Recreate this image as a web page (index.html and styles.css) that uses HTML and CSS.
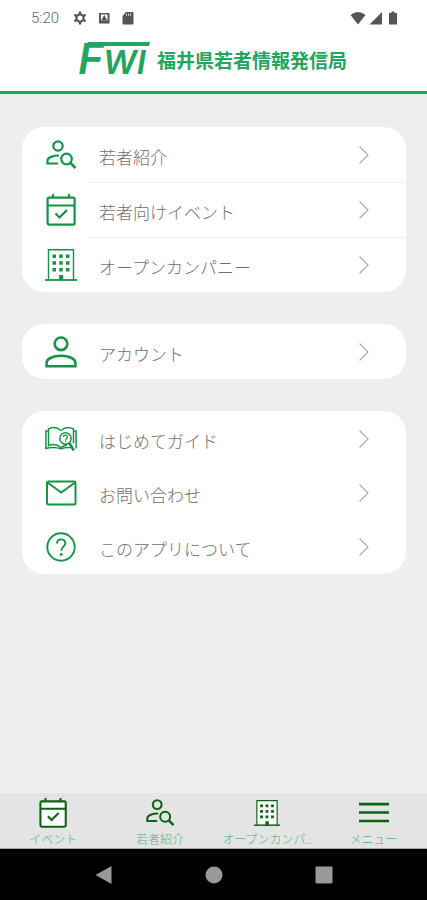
FILE: index.html
```html
<!DOCTYPE html>
<html lang="ja">
<head>
<meta charset="utf-8">
<meta name="viewport" content="width=device-width, initial-scale=1">
<title>福井県若者情報発信局</title>
<link rel="stylesheet" href="styles.css">
</head>
<body>
<svg class="defs" width="0" height="0" aria-hidden="true">
  <symbol id="person-search" viewBox="0 0 32 32">
    <g fill="none" stroke="currentColor" stroke-width="2.200">
      <circle cx="13" cy="7" r="4.700"/>
      <path d="M14 16.500C8 16.500 2.500 18.500 2.500 21.500V24.500H13"/>
      <circle cx="21.500" cy="20" r="5.300"/>
      <path d="M25.300 23.800L30.500 29" stroke-width="2.600"/>
    </g>
  </symbol>
  <symbol id="calendar" viewBox="0 0 32 32">
    <path class="paper" d="M3 4H29V31H3Z"/>
    <g fill="none" stroke="currentColor" stroke-width="2.200">
      <rect x="2.600" y="3.600" width="27" height="27" rx="1.500"/>
      <path d="M3 11.500H29M8 0V3M24 0V3"/>
      <path d="M10.500 19.500L14.500 23.500L22 16"/>
    </g>
  </symbol>
  <symbol id="building" viewBox="0 0 32 32">
    <path class="paper" d="M4 1H28V30H4Z"/>
    <path d="M3.500 31V.800H28.500V31" fill="none" stroke="currentColor" stroke-width="1.400"/>
    <path d="M0 31H32" stroke="currentColor" stroke-width="1.800"/>
    <path fill="currentColor" d="M7.500 5.500h3.500v3.500h-3.500zM14.200 5.500h3.500v3.500h-3.500zM21 5.500h3.500v3.500h-3.500zM7.500 12.300h3.500v3.500h-3.500zM14.200 12.300h3.500v3.500h-3.500zM21 12.300h3.500v3.500h-3.500zM7.500 19h3.500v3.500h-3.500zM14.200 19h3.500v3.500h-3.500zM21 19h3.500v3.500h-3.500zM14 26h4.200v5h-4.200z"/>
  </symbol>
  <symbol id="person" viewBox="0 0 32 32">
    <g fill="none" stroke="currentColor" stroke-width="2.600">
      <circle cx="16" cy="7.800" r="6.300"/>
      <path d="M1.600 30.200V27C1.600 22.500 8 19.800 16 19.800S30.400 22.500 30.400 27V30.200Z"/>
    </g>
  </symbol>
  <symbol id="guide" viewBox="0 0 32 32">
    <g fill="none" stroke="currentColor" stroke-width="1.500">
      <path d="M16 7.500C12 4 7 4 3.500 6V22.500C7 21 12 21 16 24.500C18 23 20 22.300 22 22.300M16 7.500C20 4 25 4 28.500 6V20"/>
      <path d="M3.500 8H.900V25.500C5 24 12 24 16 25.800C19 24.500 23 24.300 26 24.500M31.100 25.500V8H28.500"/>
      <circle cx="20.500" cy="15.500" r="5.700"/>
      <path d="M24.300 20L28.800 27.500" stroke-width="2.600"/>
      <path d="M18.500 14C18.500 11.500 22.500 11.500 22.500 14C22.500 15.500 20.500 15.500 20.500 17.500M20.500 18.300V19.300" stroke-width="1.200"/>
    </g>
  </symbol>
  <symbol id="mail" viewBox="0 0 32 32">
    <g fill="none" stroke="currentColor" stroke-width="2">
      <rect x="2" y="4.500" width="28.500" height="23" rx="1.500"/>
      <path d="M2.500 5.500L16.200 15.500L30 5.500"/>
    </g>
  </symbol>
  <symbol id="help" viewBox="0 0 32 32">
    <circle cx="16" cy="16" r="13.700" fill="none" stroke="currentColor" stroke-width="1.900"/>
    <path d="M12 12.500C12 7 20.300 7 20.300 12.200C20.300 15.500 16.200 15.800 16.200 19.800" fill="none" stroke="currentColor" stroke-width="1.900"/>
    <circle cx="16.200" cy="23.500" r="1.400" fill="currentColor"/>
  </symbol>
  <symbol id="menu" viewBox="0 0 32 32">
    <path d="M0 6.500H32M0 15.500H32M0 24.500H32" stroke="currentColor" stroke-width="2.800"/>
  </symbol>
  <symbol id="chevron" viewBox="0 0 12 20">
    <path d="M1.500 1.500L10 10L1.500 18.500" fill="none" stroke="currentColor" stroke-width="1.200"/>
  </symbol>
</svg>

<div class="status">
  <span class="time">5:20</span>
  <svg class="glyph" viewBox="0 0 14 14"><circle cx="7" cy="7" r="3.600" fill="none" stroke="currentColor" stroke-width="2.200"/><path d="M7 .500V3M7 11V13.500M1.400 3.800L3.500 5M10.500 9L12.600 10.200M1.400 10.200L3.500 9M10.500 5L12.600 3.800" stroke="currentColor" stroke-width="2.400"/></svg>
  <svg class="glyph" viewBox="0 0 14 14"><path fill="currentColor" fill-rule="evenodd" d="M2 2H12.500V12.500H2ZM4 3.500V9.500H10.500V3.500Z"/><path fill="currentColor" d="M7.200 4L8.800 6.500L10 9.500H4.500L5.700 6.500Z"/></svg>
  <svg class="glyph" viewBox="0 0 14 14"><path fill="currentColor" d="M5 1H11.500Q12.500 1 12.500 2V12.500Q12.500 13.500 11.500 13.500H2.500Q1.500 13.500 1.500 12.500V5Z"/><path d="M5.500 2.500V5M7.500 2.500V5M9.500 2.500V5" stroke="#fff" stroke-width=".700"/></svg>
  <span class="signals">
    <svg class="wifi" viewBox="0 0 16 14"><path fill="currentColor" d="M8 13.500L.500 4Q8-2 15.500 4Z"/></svg>
    <svg class="glyph" viewBox="0 0 14 14"><path fill="currentColor" d="M13 1V13.500H.500Z"/></svg>
    <svg class="glyph" viewBox="0 0 14 14"><path fill="currentColor" d="M5.500.500H8.500V2H11V13.500H3V2H5.500Z"/></svg>
  </span>
</div>

<header class="header">
  <svg class="logo" viewBox="0 0 70 34" role="img" aria-label="FWI">
    <path d="M8 1H70L69 5H7Z"/>
    <text class="logo-f" x="-2" y="33">F</text>
    <text class="logo-wi" x="23" y="33">WI</text>
  </svg>
  <h1 class="title">福井県若者情報発信局</h1>
</header>

<main class="main">
  <nav class="card divided">
    <a class="row" href="#youth"><svg class="icon"><use href="#person-search"/></svg><span class="line"><span class="label">若者紹介</span><svg class="chevron"><use href="#chevron"/></svg></span></a>
    <a class="row" href="#events"><svg class="icon"><use href="#calendar"/></svg><span class="line"><span class="label">若者向けイベント</span><svg class="chevron"><use href="#chevron"/></svg></span></a>
    <a class="row" href="#company"><svg class="icon"><use href="#building"/></svg><span class="line"><span class="label">オープンカンパニー</span><svg class="chevron"><use href="#chevron"/></svg></span></a>
  </nav>
  <nav class="card">
    <a class="row" href="#account"><svg class="icon"><use href="#person"/></svg><span class="line"><span class="label">アカウント</span><svg class="chevron"><use href="#chevron"/></svg></span></a>
  </nav>
  <nav class="card compact">
    <a class="row" href="#guide-page"><svg class="icon"><use href="#guide"/></svg><span class="line"><span class="label">はじめてガイド</span><svg class="chevron"><use href="#chevron"/></svg></span></a>
    <a class="row" href="#contact"><svg class="icon"><use href="#mail"/></svg><span class="line"><span class="label">お問い合わせ</span><svg class="chevron"><use href="#chevron"/></svg></span></a>
    <a class="row" href="#about"><svg class="icon"><use href="#help"/></svg><span class="line"><span class="label">このアプリについて</span><svg class="chevron"><use href="#chevron"/></svg></span></a>
  </nav>
</main>

<nav class="tabs">
  <a class="tab" href="#events"><svg class="tab-icon"><use href="#calendar"/></svg><span>イベント</span></a>
  <a class="tab" href="#youth"><svg class="tab-icon"><use href="#person-search"/></svg><span>若者紹介</span></a>
  <a class="tab" href="#company"><svg class="tab-icon small"><use href="#building"/></svg><span>オープンカンパ..</span></a>
  <a class="tab" href="#menu-page"><svg class="tab-icon"><use href="#menu"/></svg><span>メニュー</span></a>
</nav>

<div class="system">
  <button class="key" aria-label="戻る"><svg viewBox="0 0 18 18"><path d="M16.500 0V18L.500 9Z"/></svg></button>
  <button class="key" aria-label="ホーム"><svg viewBox="0 0 18 18"><circle cx="9" cy="9" r="8.500"/></svg></button>
  <button class="key" aria-label="履歴"><svg viewBox="0 0 18 18"><rect x=".500" y=".500" width="17" height="17" rx="1"/></svg></button>
</div>
</body>
</html>
```
FILE: styles.css
```css
* {
  box-sizing: border-box;
}

body {
  display: flex;
  flex-direction: column;
  min-height: 100vh;
  margin: 0;
  background: #eee;
  color: #707070;
  font-family: "Noto Sans CJK JP", sans-serif;
  font-weight: 300;
}

a {
  color: inherit;
  text-decoration: none;
}

svg {
  display: block;
  flex: none;
}

.defs {
  position: absolute;
}

.status {
  display: flex;
  align-items: center;
  gap: 10px;
  height: 36px;
  padding: 0 27px 0 31px;
  background: #fff;
  color: #555;
}

.time {
  margin-right: 4px;
  color: #666;
  font: 300 15px/20px Roboto, sans-serif;
}

.glyph {
  width: 14px;
  height: 14px;
}

.wifi {
  width: 16px;
  height: 14px;
}

.signals {
  display: flex;
  gap: 3px;
  margin-left: auto;
}

.header {
  display: flex;
  align-items: flex-start;
  justify-content: center;
  gap: 7px;
  height: 58px;
  padding-top: 5px;
  border-bottom: 3px solid #22a564;
  background: #fff;
}

.logo {
  width: 70px;
  height: 34px;
  overflow: visible;
  fill: #22a55f;
  font-family: Inter, sans-serif;
  font-style: italic;
  font-weight: 600;
}

.logo-f {
  font-size: 43px;
}

.logo-wi {
  font-size: 33px;
}

.title {
  margin: 5px 0 0;
  color: #22a55f;
  font-size: 19px;
  font-weight: 700;
  line-height: 28px;
}

.main {
  display: flex;
  flex: 1;
  flex-direction: column;
  gap: 32px;
  padding: 33px 21px 32px 22px;
}

.card {
  overflow: hidden;
  border-radius: 22px;
  background: #fff;
}

.compact {
  padding-top: 1px;
}

.row {
  display: flex;
  align-items: center;
  gap: 11px;
  height: 55px;
  padding-left: 23px;
}

.compact .row {
  height: 54px;
}

.icon {
  width: 32px;
  height: 32px;
  color: #159447;
}

.paper {
  fill: #fff;
}

.line {
  display: flex;
  flex: 1;
  align-items: center;
  justify-content: space-between;
  height: 100%;
  padding: 0 36px 0 11px;
}

.divided .row + .row .line {
  border-top: 1px solid #eee;
}

.label {
  padding-top: 4px;
  font-size: 17px;
  line-height: 24px;
}

.chevron {
  width: 12px;
  height: 20px;
  color: #aaa;
}

.tabs {
  display: grid;
  grid-template-columns: repeat(4, 1fr);
  height: 56px;
  border-bottom: 1px solid #aaa;
  background: #e4e4e4;
}

.tab {
  display: flex;
  flex-direction: column;
  align-items: center;
  justify-content: flex-end;
  color: #55b083;
  font-size: 12px;
  line-height: 18px;
  white-space: nowrap;
}

.tab-icon {
  width: 30px;
  height: 30px;
  margin-bottom: 2px;
  color: #0c6215;
}

.tab-icon.small {
  width: 26px;
  height: 26px;
  margin-bottom: 4px;
}

.system {
  display: flex;
  align-items: center;
  justify-content: center;
  gap: 92px;
  height: 51px;
  background: #000;
}

.key {
  width: 18px;
  height: 18px;
  padding: 0;
  border: 0;
  background: none;
  fill: #999;
}
```
